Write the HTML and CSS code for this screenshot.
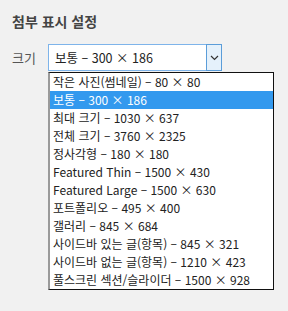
FILE: index.html
```html
<!DOCTYPE html>
<html lang="ko">
<head>
<meta charset="utf-8">
<link rel="stylesheet" href="styles.css">
</head>
<body>
<h2 class="title">첨부 표시 설정</h2>
<div class="row">
  <span class="label">크기</span>
  <div class="select">
    <span class="select-value">보통 – 300 × 186</span>
    <span class="arrow">
      <svg width="9" height="6" viewBox="0 0 9 6"><path d="M1 1 L4.5 4.5 L8 1" fill="none" stroke="#333" stroke-width="1.2"/></svg>
    </span>
    <ul class="list">
      <li>작은 사진(썸네일) – 80 × 80</li>
      <li class="active">보통 – 300 × 186</li>
      <li>최대 크기 – 1030 × 637</li>
      <li>전체 크기 – 3760 × 2325</li>
      <li>정사각형 – 180 × 180</li>
      <li>Featured Thin – 1500 × 430</li>
      <li>Featured Large – 1500 × 630</li>
      <li>포트폴리오 – 495 × 400</li>
      <li>갤러리 – 845 × 684</li>
      <li>사이드바 있는 글(항목) – 845 × 321</li>
      <li>사이드바 없는 글(항목) – 1210 × 423</li>
      <li>풀스크린 섹션/슬라이더 – 1500 × 928</li>
    </ul>
  </div>
</div>
</body>
</html>
```
FILE: styles.css
```css
html, body {
  margin: 0;
  padding: 0;
}
body {
  background: #f1f1f1;
  font-family: "Noto Sans CJK KR", "Noto Sans", sans-serif;
  width: 288px;
  height: 311px;
}
.title {
  margin: 0;
  padding: 12px 0 0 12px;
  font-size: 14px;
  font-weight: 700;
  line-height: 18px;
  color: #444;
}
.row {
  display: flex;
  align-items: center;
  margin-top: 14px;
  padding-left: 12px;
}
.label {
  width: 36px;
  font-size: 13px;
  color: #555;
}
.select {
  position: relative;
  display: flex;
  box-sizing: border-box;
  width: 174px;
  height: 27px;
  border: 1px solid #7eb4ea;
  background: #fff;
}
.select-value {
  flex: 1;
  padding-left: 6px;
  font-size: 12.5px;
  line-height: 25px;
  color: #222;
}
.arrow {
  display: flex;
  align-items: center;
  justify-content: center;
  box-sizing: border-box;
  width: 16px;
  margin: -1px -1px -1px 0;
  border: 1px solid #5b9dd9;
  background: #e5f1fb;
}
.list {
  position: absolute;
  top: 27px;
  left: -1px;
  box-sizing: border-box;
  width: 226px;
  margin: 0;
  padding: 0;
  list-style: none;
  background: #fff;
  border: 1px solid #111;
  border-left: 2px solid #9a9a9a;
}
.list li {
  height: 18px;
  line-height: 18px;
  padding-left: 3px;
  font-size: 12px;
  color: #222;
  white-space: nowrap;
}
.list li.active {
  background: #3399ee;
  color: #fff;
}
```
